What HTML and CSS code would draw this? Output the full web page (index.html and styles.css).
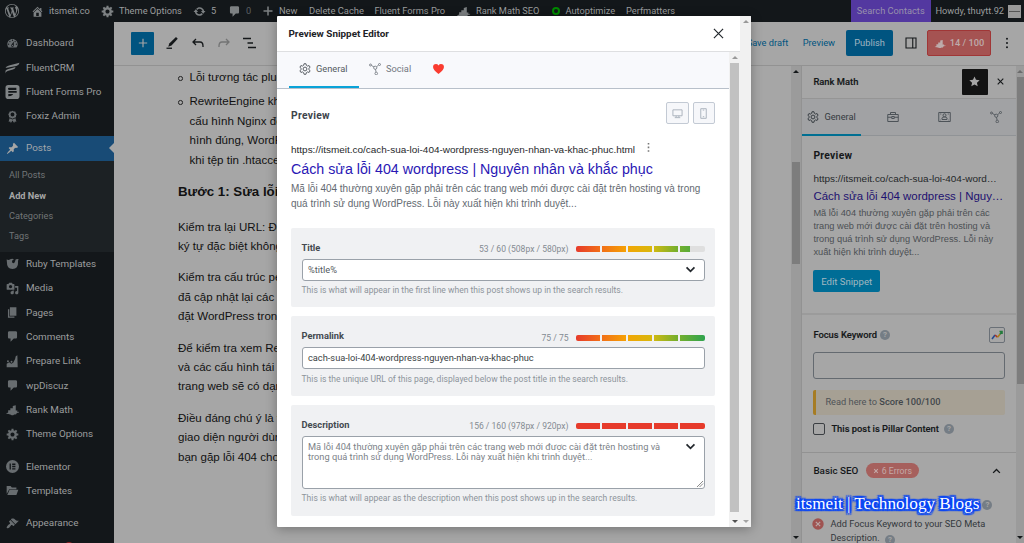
FILE: index.html
```html
<!DOCTYPE html>
<html lang="vi">
<head>
<meta charset="utf-8">
<title>Preview Snippet Editor</title>
<link rel="stylesheet" href="styles.css">
</head>
<body>
<svg class="defs" aria-hidden="true">
  <symbol id="wp" viewBox="0 0 20 20"><path d="M20 10c0-5.51-4.49-10-10-10C4.48 0 0 4.49 0 10c0 5.52 4.48 10 10 10 5.51 0 10-4.48 10-10zM7.78 15.37L4.37 6.22c.55-.02 1.17-.08 1.17-.08.5-.06.44-1.13-.06-1.11 0 0-1.45.11-2.37.11-.18 0-.37 0-.58-.01C4.12 2.69 6.87 1.11 10 1.11c2.33 0 4.45.87 6.05 2.34-.68-.11-1.65.39-1.65 1.58 0 .74.45 1.36.9 2.1.35.61.55 1.36.55 2.46 0 1.49-1.4 5-1.4 5l-3.03-8.37c.54-.02.82-.17.82-.17.5-.05.44-1.25-.06-1.22 0 0-1.44.12-2.38.12-.87 0-2.33-.12-2.33-.12-.5-.03-.56 1.2-.06 1.22l.92.08 1.26 3.41zM17.41 10c.24-.64.74-1.87.43-4.25.7 1.29 1.05 2.71 1.05 4.25 0 3.29-1.73 6.24-4.4 7.78.97-2.59 1.94-5.2 2.92-7.78zM6.1 18.09C3.12 16.65 1.11 13.53 1.11 10c0-1.3.23-2.48.72-3.59C3.25 10.3 4.67 14.2 6.1 18.09zm4.03-6.63l2.58 6.98c-.86.29-1.76.45-2.71.45-.79 0-1.57-.11-2.29-.33.81-2.38 1.62-4.74 2.42-7.1z"/></symbol>
  <symbol id="home" viewBox="0 0 20 20"><path d="M16 8.5l1.53 1.53-1.06 1.06L10 4.6l-6.47 6.49-1.06-1.06L10 2.5l4 4v-2h2v4zm-6-2.46l6 5.99V18H4v-5.97zM12 17v-5H8v5h4z"/></symbol>
  <symbol id="gear" viewBox="0 1 19 19"><path d="M18 12h-2.18c-.17.7-.44 1.35-.81 1.93l1.54 1.54-2.1 2.1-1.54-1.54c-.58.36-1.23.63-1.91.79V19H8v-2.18c-.68-.16-1.33-.43-1.91-.79l-1.54 1.54-2.12-2.12 1.54-1.54c-.36-.58-.63-1.23-.79-1.91H1V9.03h2.17c.16-.7.44-1.35.8-1.94L2.43 5.55l2.1-2.1 1.54 1.54c.58-.37 1.24-.64 1.93-.81V2h3v2.18c.68.16 1.33.43 1.91.79l1.54-1.54 2.12 2.12-1.54 1.54c.36.59.64 1.24.8 1.94H18V12zm-8.5 1.5c1.66 0 3-1.34 3-3s-1.34-3-3-3-3 1.34-3 3 1.34 3 3 3z"/></symbol>
  <symbol id="update" viewBox="0 0 20 20"><path d="M10.2 3.28c3.53 0 6.43 2.61 6.92 6h2.08l-3.5 4-3.5-4h2.32c-.45-1.97-2.21-3.45-4.32-3.45-1.45 0-2.73.71-3.54 1.78L4.95 5.66C6.23 4.2 8.11 3.28 10.2 3.28zm-.4 13.44c-3.52 0-6.43-2.61-6.92-6H.8l3.5-4c1.17 1.33 2.33 2.67 3.5 4H5.48c.45 1.97 2.21 3.45 4.32 3.45 1.45 0 2.73-.71 3.54-1.78l1.71 1.95c-1.28 1.46-3.15 2.38-5.25 2.38z"/></symbol>
  <symbol id="comment" viewBox="0 0 20 20"><path d="M5 2h10c1.1 0 2 .9 2 2v7c0 1.1-.9 2-2 2h-3l-5 5v-5H5c-1.1 0-2-.9-2-2V4c0-1.1.9-2 2-2z"/></symbol>
  <symbol id="plus" viewBox="0 0 20 20"><path d="M8.5 1h3v7.5H19v3h-7.5V19h-3v-7.500H1v-3h7.500z"/></symbol>
  <symbol id="dash" viewBox="0 0 20 20"><path d="M3.76 16h12.48c1.1-1.37 1.76-3.11 1.76-5 0-4.42-3.58-8-8-8s-8 3.580-8 8c0 1.890.66 3.63 1.76 5zM10 4c.55 0 1 .45 1 1s-.45 1-1 1-1-.45-1-1 .45-1 1-1zM6 6c.55 0 1 .45 1 1s-.45 1-1 1-1-.45-1-1 .45-1 1-1zm8 0c.55 0 1 .45 1 1s-.45 1-1 1-1-.45-1-1 .45-1 1-1zm-5.370 5.550L12 7v6c0 1.100-.9 2-2 2s-2-.9-2-2c0-.57.24-1.080.63-1.450zM4 10c.55 0 1 .45 1 1s-.45 1-1 1-1-.45-1-1 .45-1 1-1zm12 0c.55 0 1 .45 1 1s-.45 1-1 1-1-.45-1-1 .45-1 1-1zm-5 3c0-.55-.45-1-1-1s-1 .45-1 1 .45 1 1 1 1-.45 1-1z"/></symbol>
  <symbol id="crm" viewBox="0 0 20 20"><path d="M0 10Q1 7.500 5 6.600L20 2.600Q19.500 6 15.500 7zM0 14Q1 12 4 11.300L14.500 8.600Q13.500 11.500 10.500 12.300L3 14.200Q0 15 0 18z"/></symbol>
  <symbol id="forms" viewBox="0 0 20 20"><path fill-rule="evenodd" d="M4 0h12a4 4 0 014 4v12a4 4 0 01-4 4H4a4 4 0 01-4-4V4a4 4 0 014-4zM5 4a1.500 1.500 0 000 3h10.500V4zM4 8.700v2.500h12V8.700zM4 13v3l3-.2q3-.5 4-2.800z"/></symbol>
  <symbol id="award" viewBox="0 0 20 20"><path fill-rule="evenodd" d="M10 1l2 1.200 2.300.2.800 2.100L16.500 6.500 15.500 9l-.2 2-2.300.8-3 1.700-3-1.700-2.300-.8-.2-2-1-2.500 1.400-2 .8-2.100L8 2.200zm0 3a3 3 0 100 6 3 3 0 000-6zM5.500 12.500L10 14.500l4.500-2L16 18l-2.500-.5L12.500 20 10 16l-2.500 4-1-2.500L4 18z"/></symbol>
  <symbol id="pin" viewBox="0 0 20 20"><path d="M10.440 3.020l1.820-1.820 6.360 6.350-1.830 1.820c-1.050-.68-2.480-.57-3.410.36l-.75.75c-.92.93-1.040 2.350-.35 3.410l-1.830 1.820-2.410-2.410-2.800 2.790c-.42.42-3.380 2.710-3.800 2.290s1.860-3.390 2.280-3.810l2.790-2.790L4.100 9.360l1.830-1.820c1.050.69 2.480.57 3.400-.36l.75-.75c.93-.92 1.050-2.350.36-3.410z"/></symbol>
  <symbol id="ruby" viewBox="0 0 20 20"><path d="M1 4q3.500 1.500 5.500-.5 3-2 6 0-4 1-3 5 3 3 4.500-2Q14 2 19.500 3.500 18 5 18.500 9q.5 9-8.500 9.500Q1 18 1.500 9z"/></symbol>
  <symbol id="media" viewBox="0 0 20 20"><path d="M13 11V4c0-.55-.45-1-1-1h-1.670L9 1H5L3.670 3H2c-.55 0-1 .45-1 1v7c0 .55.45 1 1 1h10c.55 0 1-.45 1-1zM7 4.500c1.380 0 2.500 1.120 2.500 2.500S8.380 9.500 7 9.500 4.500 8.380 4.500 7 5.620 4.500 7 4.500zM14 6h5v10.500c0 1.380-1.120 2.500-2.500 2.500S14 17.880 14 16.500s1.120-2.500 2.500-2.500c.17 0 .34.02.5.05V9h-3V6zm-4 8.050V13h2v3.500c0 1.380-1.120 2.500-2.500 2.500S7 17.880 7 16.500 8.120 14 9.500 14c.17 0 .34.02.5.05z"/></symbol>
  <symbol id="pages" viewBox="0 0 20 20"><path d="M6 15V2h10v13H6zm-1 1h8v2H3V5h2v11z"/></symbol>
  <symbol id="area" viewBox="0 0 20 20"><path d="M18 19H1v-5.500L5 11l3 2.500 3-1.500 3-6 1-4 2.500-1.500zM1.500 9.500a1.500 1.500 0 103 0 1.500 1.500 0 10-3 0zM7 10.500a1.500 1.500 0 103 0 1.500 1.500 0 10-3 0z"/></symbol>
  <symbol id="rank" viewBox="0 0 24 20"><path d="M0 18q2-2 4-2.500V11.500h4V7.500h4.500V3.500L18 2V12h3v2.500l3-.5v1.500l-4 .8q-1 3.700-5 2.700-3 3-6 .5Q5 18 0 18z"/></symbol>
  <symbol id="elementor" viewBox="0 0 20 20"><path fill-rule="evenodd" d="M10 0a10 10 0 100 20 10 10 0 000-20zM5.500 5.500h2v9h-2zm4 0h5v2h-5zm0 3.500h5v2h-5zm0 3.500h5v2h-5z"/></symbol>
  <symbol id="folder" viewBox="0 0 20 20"><path d="M1 3h6l2 2.500h7V8H5l-3 6-1 1zM5.500 9H19l-3 8H2z"/></symbol>
  <symbol id="brush" viewBox="0 0 20 20"><path d="M14.480 11.060L7.410 3.990l1.500-1.500c.5-.56 2.300-.47 3.510.32 1.210.8 1.430 1.280 2.910 2.100 1.180.64 2.450 1.260 4.450.85zm-.71.71L6.700 4.700 4.930 6.470c-.39.39-.39 1.020 0 1.410l1.060 1.060c.39.39.39 1.030 0 1.420-.6.6-1.430 1.110-2.210 1.690-.35.26-.7.53-1.010.84C1.430 14.230.4 16.080 1.400 17.070c.99 1 2.840-.03 4.180-1.360.31-.31.58-.66.85-1.020.57-.78 1.080-1.610 1.690-2.210.39-.39 1.020-.39 1.410 0l1.060 1.060c.39.39 1.020.39 1.410 0z"/></symbol>
  <symbol id="cog" viewBox="0 0 24 24"><g fill="none" stroke="currentColor" stroke-width="1.900" stroke-linejoin="round"><path d="M10 1.500h4l.7 3.200 2.300 1.400 3.200-1 2 3.500-2.500 2.200v2.400l2.500 2.200-2 3.500-3.200-1-2.300 1.400-.7 3.200h-4l-.7-3.200L7 17.900l-3.200 1-2-3.500 2.500-2.200v-2.400L1.800 8.600l2-3.500 3.200 1 2.300-1.400z"/><circle cx="12" cy="12" r="3.800"/></g></symbol>
  <symbol id="social" viewBox="0 0 24 24"><g fill="none" stroke="currentColor" stroke-width="1.700"><circle cx="3" cy="4" r="2"/><circle cx="21" cy="3" r="2"/><circle cx="12.500" cy="9.500" r="3.200"/><circle cx="14.500" cy="21" r="2.600"/><path d="M5 5l5 3M19.200 4L15.200 7.500M13 12.500l1 5.500"/></g></symbol>
</svg>

<header class="adminbar">
  <span class="wp-logo"><svg><use href="#wp"/></svg></span>
  <span><svg class="i13"><use href="#home"/></svg><b>itsmeit.co</b></span>
  <span><svg class="i13"><use href="#gear"/></svg><b>Theme Options</b></span>
  <span><svg class="i13"><use href="#update"/></svg><b>5</b></span>
  <span class="faded"><svg class="i13"><use href="#comment"/></svg><b>0</b></span>
  <span><svg class="i10"><use href="#plus"/></svg><b class="t-new">New</b></span>
  <span><b class="t-cache">Delete Cache</b></span>
  <span><b>Fluent Forms Pro</b></span>
  <span><svg class="i-rank"><use href="#rank"/></svg><b>Rank Math SEO</b></span>
  <span><i class="ring"></i><b>Autoptimize</b></span>
  <span><b>Perfmatters</b></span>
  <span class="search-contacts"><b>Search Contacts</b></span>
  <span class="howdy"><b>Howdy, thuytt.92</b><i class="avatar"></i></span>
</header>

<div class="shell">
  <nav class="menu">
    <a><svg><use href="#dash"/></svg><b>Dashboard</b></a>
    <a><svg class="big"><use href="#crm"/></svg><b>FluentCRM</b></a>
    <a><svg class="big"><use href="#forms"/></svg><b>Fluent Forms Pro</b></a>
    <a><svg><use href="#award"/></svg><b>Foxiz Admin</b></a>
    <a class="active"><svg><use href="#pin"/></svg><b>Posts</b></a>
    <div class="submenu"><a>All Posts</a><a class="current">Add New</a><a>Categories</a><a>Tags</a></div>
    <a><svg><use href="#ruby"/></svg><b>Ruby Templates</b></a>
    <a><svg><use href="#media"/></svg><b>Media</b></a>
    <a><svg><use href="#pages"/></svg><b>Pages</b></a>
    <a><svg><use href="#comment"/></svg><b>Comments</b></a>
    <a><svg><use href="#area"/></svg><b>Prepare Link</b></a>
    <a><svg><use href="#comment"/></svg><b>wpDiscuz</b></a>
    <a><svg><use href="#rank"/></svg><b>Rank Math</b></a>
    <a><svg><use href="#gear"/></svg><b>Theme Options</b></a>
    <a class="spaced"><svg><use href="#elementor"/></svg><b>Elementor</b></a>
    <a><svg><use href="#folder"/></svg><b>Templates</b></a>
    <a class="spaced"><svg><use href="#brush"/></svg><b>Appearance</b></a>
    <i class="update-count"></i>
  </nav>

  <main class="editor">
    <div class="toolbar">
      <button class="add"><svg viewBox="0 0 24 24"><path d="M12 2v20M2 12h20"/></svg></button>
      <svg class="tool pen" viewBox="0 0 24 24"><path class="solid" d="M20 0l3.500 3.500L11 17 4.500 19.500l2-6.500z"/><path d="M1 22.500h11"/></svg>
      <svg class="tool undo" viewBox="0 0 24 24"><path d="M8 4L2 10l6 6M2 10h14q6 0 6 8v2"/></svg>
      <svg class="tool redo" viewBox="0 0 24 24"><path d="M16 4l6 6-6 6M22 10H8q-6 0-6 8v2"/></svg>
      <svg class="tool outline" viewBox="0 0 26 24"><path d="M0 3h16M9 12h11M10 21h16"/></svg>
      <div class="actions">
        <a class="save">Save draft</a><a class="preview-link">Preview</a>
        <button class="publish">Publish</button>
        <svg class="side-icon" viewBox="0 0 24 24"><path d="M2 2h20v20H2zM15.500 2v20"/></svg>
        <span class="score"><svg><use href="#rank"/></svg>14 / 100</span>
        <svg class="dots" viewBox="0 0 4 14"><circle cx="2" cy="2" r="1.200"/><circle cx="2" cy="7" r="1.200"/><circle cx="2" cy="12" r="1.200"/></svg>
      </div>
    </div>
    <div class="workspace">
      <article>
        <ul>
          <li>Lỗi tương tác plugin</li>
          <li>RewriteEngine không<br>cấu hình Nginx để<br>hình đúng, WordPress<br>khi tệp tin .htaccess</li>
        </ul>
        <h2>Bước 1: Sửa lỗi</h2>
        <p>Kiểm tra lại URL: Đảm<br>ký tự đặc biệt không</p>
        <p>Kiểm tra cấu trúc per<br>đã cập nhật lại các<br>đặt WordPress trong</p>
        <p>Để kiểm tra xem Rew<br>và các cấu hình tái<br>trang web sẽ có dạng</p>
        <p>Điều đáng chú ý là <a>trang</a><br>giao diện người dùng<br>bạn gặp lỗi 404 cho</p>
      </article>
      <div class="scroll editor-scroll"><i class="up"></i><i class="thumb"></i><i class="down"></i></div>
      <aside>
        <div class="aside-head"><b>Rank Math</b><span class="star"><svg viewBox="0 0 24 24"><path d="M12 1l3.300 7.400 8 .8-6 5.400 1.700 7.900-7-4.100-7 4.100 1.700-7.900-6-5.400 8-.8z"/></svg></span><svg class="close-sm" viewBox="0 0 10 10"><path d="M1 1l8 8M9 1L1 9"/></svg></div>
        <div class="aside-tabs">
          <span class="on"><svg><use href="#cog"/></svg>General</span>
          <span><svg viewBox="0 0 24 24"><path d="M1.500 7h21v14h-21zM7 7V3h10v4M1.500 12.500h8m5 0h8M9.500 11h5v4h-5z"/></svg></span>
          <span><svg viewBox="0 0 26 24"><path d="M1.500 3h23v18h-23zM8 17h10v-3q0-2-5-2t-5 2zM4.500 6h2m13 0h2M4.500 18h1m15 0h1"/><circle cx="13" cy="8.500" r="3"/></svg></span>
          <span><svg><use href="#social"/></svg></span>
        </div>
        <section class="aside-preview">
          <h3>Preview</h3>
          <div class="url">https://itsmeit.co/cach-sua-loi-404-word…</div>
          <div class="headline">Cách sửa lỗi 404 wordpress | Nguy…</div>
          <div class="desc"><span>Mã lỗi 404 thường xuyên gặp phải trên các</span><br><span>trang web mới được cài đặt trên hosting và</span><br><span>trong quá trình sử dụng WordPress. Lỗi này</span><br><span>xuất hiện khi trình duyệt...</span></div>
          <button>Edit Snippet</button>
        </section>
        <section class="focus">
          <div class="focus-head"><b>Focus Keyword</b><i class="help">?</i><span class="trend"><svg viewBox="0 0 14 14"><path stroke="#244a91" d="M2 11l3-4"/><path stroke="#a83228" d="M5 7l2.500 2.200"/><path stroke="#ab7d13" d="M7.500 9.200L10 6.300"/><path stroke="#237a3b" d="M10 6.300L12 3.500M9.500 3.500H12v2.600"/></svg></span></div>
          <div class="keyword"></div>
          <div class="notice">Read here to <b>Score 100/100</b></div>
          <div class="pillar"><i></i><b>This post is Pillar Content</b><i class="help">?</i></div>
        </section>
        <section class="basic">
          <div class="basic-head"><b>Basic SEO</b><span><svg viewBox="0 0 10 10"><path d="M2 2l6 6M8 2L2 8"/></svg>6 Errors</span><svg class="chev" viewBox="0 0 12 8"><path d="M1.500 6.500L6 2l4.500 4.500"/></svg></div>
          <div class="first"><i class="help">?</i></div>
          <div class="error"><svg viewBox="0 0 12 12"><circle cx="6" cy="6" r="5.700"/><path d="M3.800 3.800l4.400 4.400M8.200 3.800L3.800 8.200"/></svg><div>Add Focus Keyword to your SEO Meta<br>Description. <i class="help">?</i></div></div>
        </section>
      </aside>
      <div class="scroll page-scroll"><i class="up"></i><i class="thumb"></i><i class="down"></i></div>
    </div>
  </main>
</div>

<div class="modal">
  <div class="modal-main">
    <div class="modal-head"><b>Preview Snippet Editor</b><svg viewBox="0 0 12 12"><path d="M1 1l10 10M11 1L1 11"/></svg></div>
    <div class="modal-body">
      <div class="modal-content">
        <div class="tabs">
          <span class="on"><svg><use href="#cog"/></svg>General</span>
          <span class="soc"><svg><use href="#social"/></svg>Social</span>
          <svg class="heart" viewBox="0 0 24 22"><path d="M12 22Q0 13 0 6.500 0 0 6.500 0 10 0 12 3.200 14 0 17.500 0 24 0 24 6.500 24 13 12 22z"/></svg>
        </div>
        <div class="snippet">
          <div class="snippet-head"><h3>Preview</h3>
            <span><svg viewBox="0 0 24 24"><path d="M2 4h20v13H2zM9 17v3m6-3v3M6 21h12"/></svg></span>
            <span><svg viewBox="0 0 24 24"><path d="M6 1.500h12v21H6zM10.500 19h3M10.500 4.500h3"/></svg></span>
          </div>
          <div class="url"><span>https://itsmeit.co/cach-sua-loi-404-wordpress-nguyen-nhan-va-khac-phuc.html</span><svg viewBox="0 0 3 9"><path d="M.7 0h1.600v1.600H.7zM.7 3.600h1.600v1.600H.7zM.7 7.200h1.600v1.600H.7z"/></svg></div>
          <div class="headline">Cách sửa lỗi 404 wordpress | Nguyên nhân và khắc phục</div>
          <div class="desc"><span>Mã lỗi 404 thường xuyên gặp phải trên các trang web mới được cài đặt trên hosting và trong</span><br><span>quá trình sử dụng WordPress. Lỗi này xuất hiện khi trình duyệt...</span></div>
        </div>
        <div class="field">
          <div class="field-head"><b>Title</b><span>53 / 60 (508px / 580px)</span><div class="meter m88"><i></i><i></i><i></i><i></i><i></i></div></div>
          <div class="input">%title%<svg class="chev" viewBox="0 0 12 8"><path d="M1.500 1.500L6 6l4.500-4.500"/></svg></div>
          <p>This is what will appear in the first line when this post shows up in the search results.</p>
        </div>
        <div class="field">
          <div class="field-head"><b>Permalink</b><span>75 / 75</span><div class="meter"><i></i><i></i><i></i><i></i><i></i></div></div>
          <div class="input slug">cach-sua-loi-404-wordpress-nguyen-nhan-va-khac-phuc</div>
          <p>This is the unique URL of this page, displayed below the post title in the search results.</p>
        </div>
        <div class="field">
          <div class="field-head"><b>Description</b><span>156 / 160 (978px / 920px)</span><div class="meter bad"><i></i><i></i><i></i><i></i><i></i></div></div>
          <div class="input area"><div>Mã lỗi 404 thường xuyên gặp phải trên các trang web mới được cài đặt trên hosting và<br>trong quá trình sử dụng WordPress. Lỗi này xuất hiện khi trình duyệt...</div><svg class="chev" viewBox="0 0 12 8"><path d="M1.500 1.500L6 6l4.500-4.500"/></svg><svg class="grip" viewBox="0 0 7 7"><path d="M0 7l7-7M3 7l4-4"/></svg></div>
          <p>This is what will appear as the description when this post shows up in the search results.</p>
        </div>
      </div>
      <div class="scroll inner-scroll"><i class="up"></i><i class="thumb"></i><i class="down"></i></div>
    </div>
  </div>
  <div class="scroll outer-scroll"><i class="up"></i><i class="down"></i></div>
</div>
<div class="watermark">itsmeit | Technology Blogs</div>
</body>
</html>
```
FILE: styles.css
```css
* { box-sizing: border-box; }
body { margin: 0; width: 1024px; height: 543px; overflow: hidden; position: relative; font: 9.250px/14px Roboto, sans-serif; background: #a6a6a6; color: #15181a; }
h2, h3, p, ul { margin: 0; padding: 0; }
button { border: 0; padding: 0; font: inherit; }
i { font-style: normal; }
svg { display: block; flex: none; fill: currentColor; overflow: visible; }
.defs { position: absolute; width: 0; height: 0; }

.adminbar { height: 22px; background: #13171a; color: #9b9d9e; display: grid; grid-template-columns: 31px 70px 92px 35px 35px 46px 65.500px 81.500px 95.500px 74.500px 225px 79.500px 93.500px; align-items: center; }
.adminbar > span { display: flex; align-items: center; height: 22px; white-space: nowrap; }
.adminbar b { font-weight: 400; }
.adminbar svg + b { margin-left: 5px; }
.adminbar svg { color: #7d8183; }
.adminbar svg + .t-new { margin-left: 6px; }
.t-cache { font-size: 9.380px; }
.wp-logo svg { width: 14px; height: 14px; margin-left: 5px; }
.i13 { width: 13px; height: 13px; }
.i10 { width: 10px; height: 10px; }
.i-rank { width: 15px; height: 11px; }
.faded b { color: #5b5f62; }
.ring { width: 8px; height: 8px; border: 2px solid #008a00; border-radius: 50%; margin-right: 5.500px; margin-left: .5px; flex: none; }
.adminbar .search-contacts { background: #5338a0; justify-content: center; color: #9790ac; }
.adminbar .howdy { padding-left: 5px; justify-content: space-between; padding-right: 3px; }
.avatar { flex: none; width: 13px; height: 13px; background: linear-gradient(#999 5px, #555 5px, #555 6.500px, #999 6.500px); border: 1px solid #999; }

.shell { display: flex; height: 521px; }
.menu { width: 114px; background: #13171a; padding-top: 9px; color: #9b9d9e; font-size: 9.900px; position: relative; overflow: hidden; }
.menu > a { display: flex; align-items: center; height: 24.350px; padding: 0 0 0 6px; white-space: nowrap; }
.menu svg { width: 13px; height: 13px; margin-right: 7px; color: #686d70; }
.menu svg.big { width: 15px; height: 14px; margin-left: -1px; margin-right: 6px; color: #808486; }
.menu b { font-weight: 400; }
.menu > a.active { background: #184b76; margin-top: 7.800px; position: relative; color: #a3a7ab; }
.menu > a.active svg { color: #a6a6a6; }
.active::after { content: ""; position: absolute; right: 0; top: 7px; border: 5.500px solid transparent; border-left: 0; border-right-color: #a6a6a6; }
.submenu { background: #1c2124; padding: 4.900px 0 4.900px 9px; font-size: 9.200px; color: #717577; }
.submenu a { display: block; height: 20.350px; line-height: 20px; }
.submenu .current { color: #a6a6a6; font-weight: 700; }
.menu > .spaced { margin-top: 8px; }
.update-count { display: block; width: 8px; height: 8px; border-radius: 50%; background: #8c2425; margin: 7px 0 0 65px; }

.editor { flex: 1; display: flex; flex-direction: column; min-width: 0; }
.toolbar { height: 43.500px; border-bottom: 1px solid #929292; display: flex; align-items: center; padding-left: 17px; }
.toolbar .add { width: 23px; height: 23px; background: #005480; border-radius: 1px; display: grid; place-items: center; }
.add svg { width: 10px; height: 10px; stroke: #a6a6a6; stroke-width: 2.800; }
.tool { width: 12px; height: 12px; fill: none; stroke: #15181a; stroke-width: 2.600; }
.tool .solid { fill: #15181a; stroke: none; }
.pen { margin-left: 12px; } .undo { margin-left: 14px; } .redo { margin-left: 14px; opacity: .35; } .outline { margin-left: 13px; width: 13px; }
.actions { margin-left: auto; display: flex; align-items: center; color: #005480; padding-right: 16px; }
.preview-link { margin-left: 14.500px; }
.publish { width: 47px; height: 26px; margin-left: 11px; background: #005480; color: #a0b4c0; border-radius: 2px; }
.side-icon { width: 12px; height: 12px; margin-left: 12px; fill: none; stroke: #15181a; stroke-width: 2.200; }
.score { margin-left: 10px; width: 64px; height: 26px; border: 1px solid #a03636; background: #a55352; border-radius: 2px; color: #bdabab; display: flex; align-items: center; justify-content: center; font-weight: 500; }
.score svg { width: 12px; height: 9px; margin-right: 4px; }
.dots { width: 4px; height: 12px; margin-left: 14px; margin-right: -1px; color: #15181a; }

.workspace { flex: 1; display: flex; min-height: 0; }
article { width: 677px; padding: 2.500px 0 0 64px; font: 11.550px/19.400px "Liberation Sans", sans-serif; color: #111; overflow: hidden; white-space: nowrap; }
article ul { list-style: none; }
article li { position: relative; padding-left: 11.500px; margin-bottom: 5px; }
article li::before { content: ""; position: absolute; left: 0; top: 8px; width: 2.500px; height: 2.500px; border: 1px solid #222; border-radius: 50%; }
article h2 { font-size: 13.300px; line-height: 20px; margin: 11.500px 0 16px; }
article p { margin-bottom: 12px; }
article a { color: #a67c24; }

.scroll { position: relative; flex: none; }
.scroll i { position: absolute; left: 50%; }
.scroll .up, .scroll .down { margin-left: -3px; border: 3px solid transparent; }
.scroll .up { top: 1px; border-bottom-color: #15181a; border-top: 0; margin-top: 3px; }
.scroll .down { bottom: 4px; border-top-color: #15181a; border-bottom: 0; }
.scroll .thumb { left: 1px; right: 1px; }
.editor-scroll { width: 10px; background: #9b9b9b; }
.editor-scroll .thumb { top: 96px; height: 102px; background: #7d7d7d; }
.page-scroll { width: 8px; background: #9b9b9b; }
.page-scroll .up { border-bottom-color: #6b6b6b; }
.page-scroll .thumb { top: 11px; height: 307px; background: #7d7d7d; right: 0; }

aside { width: 215px; border-left: 1px solid #929292; overflow: hidden; }
.aside-head { height: 33px; border-bottom: 1px solid #959595; display: flex; align-items: center; padding-left: 11.400px; }
.aside-head b { font-weight: 500; width: 148.600px; font-size: 9.400px; -webkit-text-stroke: .15px currentColor; }
.star { width: 26px; height: 26px; background: #131313; border-radius: 1px; display: grid; place-items: center; color: #a6a6a6; }
.star svg { width: 11px; height: 11px; }
.close-sm { width: 7px; height: 7px; margin-left: 9px; stroke: #15181a; stroke-width: 1.600; }
.aside-tabs { height: 37px; display: grid; grid-template-columns: 59px 65px 38px 1fr; border-bottom: 1px solid #909396; background: #a1a2a4; color: #4d5358; align-items: center; }
.aside-tabs > span { display: flex; align-items: center; height: 37px; }
.aside-tabs > .on { border-bottom: 2px solid #006f92; padding-left: 5.400px; padding-top: 1px; color: #353b40; }
.aside-tabs svg { width: 12px; height: 12px; }
.aside-tabs .on svg { margin-right: 5px; }
.aside-tabs > span:nth-child(2) svg, .aside-tabs > span:nth-child(3) svg { fill: none; stroke: currentColor; stroke-width: 2; }
.aside-tabs > span:nth-child(2) { padding-left: 26px; }
.aside-tabs > span:nth-child(3) { padding-left: 12px; }
.aside-tabs > span:nth-child(3) svg { width: 13px; }
.aside-tabs > span:nth-child(4) { padding-left: 26px; }
.aside-preview { height: 179.500px; border-bottom: 2px solid #9b9b9b; padding: 12.500px 0 0 11.400px; font-family: "Liberation Sans", sans-serif; white-space: nowrap; }
aside h3, .snippet-head h3 { font: 700 10.300px/16px Roboto, sans-serif; letter-spacing: .3px; }
.aside-preview .url { margin-top: 7px; font-size: 9.980px; line-height: 16px; color: #25282a; }
.aside-preview .headline { font-size: 11.450px; line-height: 18px; color: #1d1170; }
.aside-preview .desc { margin-top: 2px; font-size: 9.250px; line-height: 13.100px; color: #4c5054; }
.aside-preview button { display: block; margin-top: 11px; width: 66.500px; height: 22px; border-radius: 2px; background: #006d96; color: #a0b7c0; font: 9.600px Roboto, sans-serif; }
.focus { height: 138px; padding: 11px 11px 0 11.400px; border-bottom: 1px solid #929292; }
.focus-head { display: flex; align-items: center; height: 17px; }
b { font-weight: 700; }
.focus-head b, .pillar b { font-weight: 500; font-size: 9.350px; -webkit-text-stroke: .15px currentColor; }
.help { width: 10px; height: 10px; border-radius: 50%; background: #757d85; color: #a6a6a6; font: 700 8px/10px Roboto, sans-serif; text-align: center; display: inline-block; margin-left: 3px; flex: none; }
.trend { margin-left: auto; width: 16px; height: 16px; border: 1px solid #6a7077; border-radius: 2px; }
.trend svg { width: 14px; height: 14px; fill: none; stroke-width: 1.600; }
.keyword { height: 27px; border: 1px solid #646a70; border-radius: 3px; margin-top: 8.500px; }
.notice { margin-top: 11.500px; height: 24.500px; border-left: 3px solid #a67c24; background: #a6a094; border-radius: 2px; padding: 5px 0 0 9px; color: #4f5357; }
.notice b { font-weight: 500; color: #42474b; }
.pillar { margin-top: 7px; display: flex; align-items: center; }
.pillar > i:first-child { width: 12px; height: 12px; border: 1px solid #3b3f43; border-radius: 2px; margin-right: 6px; }
.pillar .help { margin-left: 5px; }
.basic { padding: 9px 12px 0 11.400px; }
.basic-head { display: flex; align-items: center; height: 17px; }
.basic-head b { font-weight: 500; font-size: 9.850px; }
.basic-head span { margin-left: 7.500px; width: 53px; height: 15px; border-radius: 8px; background: #a6605d; color: #c4a9a8; display: flex; align-items: center; justify-content: center; font-size: 8.700px; }
.basic-head span svg { width: 6px; height: 6px; stroke: currentColor; stroke-width: 1.800; margin-right: 3px; }
.chev { width: 11px; height: 7px; fill: none; stroke: currentColor; stroke-width: 1.800; }
.basic-head .chev { margin-left: auto; margin-right: 3px; width: 9px; height: 6px; }
.first { height: 28px; padding: 21px 0 0 166px; }
.first .help { display: block; }
.error { display: flex; padding-top: 10px; color: #33383c; line-height: 14.300px; white-space: nowrap; }
.error > svg { width: 12px; height: 12px; color: #9f5351; margin: 1px 6px 0 -1px; }
.error > svg path { stroke: #b9a5a5; stroke-width: 1.200; }
.error .help { vertical-align: -1px; }

.modal { position: absolute; left: 277px; top: 16px; width: 474px; height: 511px; background: #fff; display: flex; box-shadow: 0 2px 12px rgba(0,0,0,.3); border-radius: 1px; overflow: hidden; }
.modal-main { width: 463px; }
.modal-head { height: 35px; display: flex; align-items: center; padding-left: 11.500px; color: #1e2327; }
.modal-head b { font-size: 9.900px; width: 424px; }
.modal-head svg { width: 11px; height: 11px; stroke: #23282d; stroke-width: 1.300; }
.modal-body { display: flex; height: 476px; border-top: 1px solid #dedfe1; }
.modal-content { width: 452px; }
.tabs { height: 36.500px; background: #f8f9fc; border-bottom: 1px solid #b8c0ca; display: flex; align-items: center; padding-left: 11.500px; color: #72787f; }
.tabs span { display: flex; align-items: center; height: 36px; }
.tabs .on { width: 70px; padding-left: 10.500px; border-bottom: 2px solid #0aa3d8; color: #555b61; padding-top: 1px; }
.tabs span svg { width: 12px; height: 12px; margin-right: 5px; }
.tabs .soc { padding-left: 10.500px; width: 74.500px; padding-bottom: 1px; }
.heart { width: 11px; height: 10px; color: #fa3c30; margin-top: -1px; }
.snippet { padding: 13px 14px 0; height: 139px; font-family: "Liberation Sans", sans-serif; white-space: nowrap; }
.snippet-head { height: 23px; display: flex; align-items: center; gap: 4px; }
.snippet-head h3 { flex: 1; color: #3d444b; padding-top: 5px; }
.snippet-head span { width: 22.500px; height: 22px; border: 1px solid #c3cad4; background: #f6f7fa; border-radius: 2px; display: grid; place-items: center; color: #a7afba; }
.snippet-head span svg { width: 11px; height: 11px; fill: none; stroke: currentColor; stroke-width: 2; }
.modal .url { margin-top: 16px; margin-bottom: .5px; font-size: 9.980px; line-height: 17px; height: 17px; color: #27292b; display: flex; align-items: center; }
.modal .url svg { width: 3px; height: 9px; margin-left: 12px; margin-top: -3px; color: #777; }
.modal .headline { font-size: 14.250px; line-height: 22px; color: #2a18b5; }
.modal .desc { font-size: 9.990px; line-height: 15.600px; margin-top: .5px; color: #646a71; }
.field { width: 424px; margin: 0 0 9px 14px; padding: 11.500px 10.500px 0; height: 79.500px; background: #f0f1f3; border-radius: 2px; white-space: nowrap; }
.field:last-child { height: 111px; }
.field-head { height: 19.500px; padding-top: 1px; display: flex; align-items: center; }
.field-head b { color: #43494f; font-size: 9.300px; margin-top: -3px; flex: 1; }
.field-head span { color: #848b92; font-size: 8.560px; margin-right: 7px; }
.meter { width: 129px; height: 6px; display: grid; grid-template-columns: repeat(5, 1fr); gap: 1.500px; border-radius: 2px; overflow: hidden; }
.meter i:nth-child(1) { background: linear-gradient(90deg, #e63b2b, #f26e18); }
.meter i:nth-child(2) { background: linear-gradient(90deg, #f27018, #f5a104); }
.meter i:nth-child(3) { background: linear-gradient(90deg, #f2a505, #d8b80d); }
.meter i:nth-child(4) { background: linear-gradient(90deg, #ceb912, #72af2e); }
.meter i:nth-child(5) { background: linear-gradient(90deg, #72af2e, #2ea34e); }
.m88 i:nth-child(5) { background: linear-gradient(90deg, #72af2e, #58ab3a 10px, #dfdfdf 10px); }
.meter.bad i { background: #e63b2b; }
.input { height: 22px; border: 1px solid #9aa1a9; border-radius: 3px; background: #fff; padding: 0 7.500px 0 5.500px; display: flex; align-items: center; justify-content: space-between; font-size: 9.260px; color: #555b61; position: relative; }
.slug { color: #3a3f44; }
.input .chev { color: #23282d; stroke-width: 2; }
.input.area { height: 53px; align-items: flex-start; padding-top: 5px; line-height: 10.800px; color: #7c8288; }
.area .chev { margin-top: 1px; }
.grip { position: absolute; right: 1px; bottom: 1px; width: 6px; height: 6px; stroke: #777; stroke-width: 1; }
.field p { font-size: 8.560px; line-height: 14px; color: #8d949b; margin-top: 2.500px; }
.inner-scroll, .outer-scroll { width: 11px; background: #f1f1f1; }
.inner-scroll .up, .outer-scroll .up { border-bottom-color: #999; }
.inner-scroll .thumb { top: 10.500px; height: 449px; background: #c1c1c1; }
.inner-scroll .down { border-top-color: #505050; }
.outer-scroll .down { border-top-color: #a3a3a3; }
.watermark { position: absolute; left: 796px; top: 492px; font: 17.150px/23px "Liberation Serif", serif; color: #fff; white-space: nowrap; text-shadow: 2px 2px 1px #0a46f5, -2px -2px 1px #0a46f5, 2px -2px 1px #0a46f5, -2px 2px 1px #0a46f5, 2px 0 1px #0a46f5, -2px 0 1px #0a46f5, 0 2px 1px #0a46f5, 0 -2px 1px #0a46f5, 1px 0 0 #0a46f5, -1px 0 0 #0a46f5, 0 0 3px #0a46f5; }
```
